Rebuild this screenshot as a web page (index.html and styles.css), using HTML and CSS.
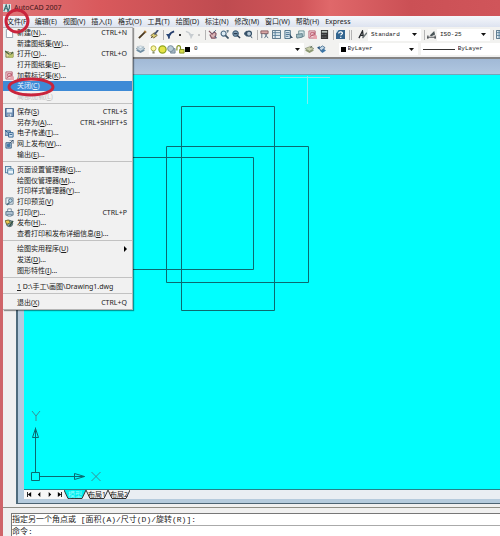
FILE: index.html
```html
<!DOCTYPE html>
<html>
<head>
<meta charset="utf-8">
<title>AutoCAD 2007</title>
<link rel="stylesheet" href="styles.css">
</head>
<body>
<svg class="defs" aria-hidden="true">
  <symbol id="new" viewBox="0 0 10 10"><path d="M1.500.5h5l2 2v7h-7z" fill="#fff" stroke="#8d98a8"/><path d="M6.500.5v2h2" fill="none" stroke="#8d98a8"/></symbol>
  <symbol id="open" viewBox="0 0 10 10"><path d="M1 2h3l1 1h4v5H1z" fill="#e4dc9a" stroke="#7c7a52"/><path d="M0 1l5 4M4 8l5-6" stroke="#46633c" stroke-width="1.300"/><path d="M3 8l2-3h5L8 9z" fill="#b8c36a"/></symbol>
  <symbol id="markup" viewBox="0 0 10 10"><path d="M1 1h7v8H1z" fill="#f4d5da" stroke="#b66677"/><path d="M3 3h4v3H3zM2 8l6-5" fill="none" stroke="#b8566a"/><path d="M6 6h4v4H6z" fill="#e7a5ae"/></symbol>
  <symbol id="save" viewBox="0 0 10 10"><path d="M.5.5h9v9h-9z" fill="#7091b5" stroke="#3e5c83"/><path d="M2 1h6v4H2z" fill="#e6eef6"/><path d="M3 6.500h4v3H3z" fill="#d4dfe9"/><path d="M4 7h1v2H4z" fill="#345"/></symbol>
  <symbol id="send" viewBox="0 0 10 10"><path d="M0 2h6v5H0z" fill="#9fb8cf" stroke="#43688f"/><path d="M4 4h5v5H4z" fill="#d6e6f2" stroke="#2a608f"/><path d="M0 1l3 3M5 6h3" stroke="#1d5586"/></symbol>
  <symbol id="web" viewBox="0 0 10 10"><path d="M1 3h6v6H1z" fill="#a8bed2" stroke="#426383"/><circle cx="4" cy="6" r="2" fill="#437aa6"/><path d="M5 4l4-4v4M5 0h4" fill="none" stroke="#344f6b"/></symbol>
  <symbol id="page" viewBox="0 0 10 10"><rect x=".5" y=".5" width="6" height="7" fill="#dce9f2" stroke="#507b9c"/><rect x="3" y="3" width="6.500" height="6" rx="1" fill="#eaf4fb" stroke="#3f7399"/><path d="M3 4.500h6" stroke="#75a5c5"/></symbol>
  <symbol id="preview" viewBox="0 0 10 10"><path d="M1 1h8v7H1z" fill="#e8f0f5" stroke="#6c8292"/><circle cx="6" cy="4" r="2" fill="#c2dcec" stroke="#45677e"/><path d="M5 6L2 9" stroke="#45677e" stroke-width="1.500"/></symbol>
  <symbol id="print" viewBox="0 0 10 10"><path d="M3 4V1h4v3" fill="#fff" stroke="#718597"/><path d="M1 4h8v4H1z" fill="#b7cad9" stroke="#557085"/><path d="M3 7h4v2H3z" fill="#f5faff" stroke="#647f94"/></symbol>
  <symbol id="publish" viewBox="0 0 10 10"><circle cx="5" cy="5" r="3.500" fill="#83a6b2" stroke="#4a5f62"/><path d="M0 2l4-1 2 3-4 2z" fill="#e8c850" stroke="#6d652e"/><path d="M5 8l4-6" stroke="#354f3f" stroke-width="1.500"/></symbol>
  <symbol id="pencil" viewBox="0 0 10 10"><path d="M1 9L8 2" stroke="#493820" stroke-width="2"/><path d="M7 1l2 2" stroke="#a67a3d" stroke-width="2"/></symbol>
  <symbol id="brush" viewBox="0 0 10 10"><path d="M1 6l4-3 3 3-4 3z" fill="#d8cc74" stroke="#746332"/><path d="M5 5l4-5" stroke="#415070" stroke-width="2"/><path d="M1 9l2-2" stroke="#4f452a"/></symbol>
  <symbol id="undo" viewBox="0 0 10 10"><path d="M3.500 9.500C2 6.500 4 3 9 1.500" fill="none" stroke="#233c6b" stroke-width="2"/><path d="M0 4.500l6 0-3 4.500z" fill="#294778"/></symbol>
  <symbol id="redo" viewBox="0 0 10 10"><path d="M6.500 9.500C8 6.500 6 3 1 1.500" fill="none" stroke="#c7ccd0" stroke-width="1.500"/><path d="M4 4.500h6L7 9z" fill="#c7ccd0"/></symbol>
  <symbol id="pan" viewBox="0 0 10 10"><path d="M1 1l4 4M2 5l2 4h4l1-5-2-2-2 2" fill="#dab3b5" stroke="#805260" stroke-width="1.200"/><path d="M6 3l3-3M7 7l3 2" stroke="#4d6988"/></symbol>
  <symbol id="zoom" viewBox="0 0 10 10"><circle cx="4" cy="4" r="2.800" fill="#dcebf3" stroke="#476780" stroke-width="1.200"/><path d="M6 6l3.500 3.500" stroke="#3a5264" stroke-width="1.800"/><path d="M7 1h3M8.500 0v3" stroke="#56717f"/></symbol>
  <symbol id="zoomwin" viewBox="0 0 10 10"><circle cx="4" cy="4" r="3" fill="#829fb5" stroke="#405f79" stroke-width="1.200"/><path d="M6 6l3 3M2 4h4" stroke="#283c51" stroke-width="1.600"/></symbol>
  <symbol id="zoomprev" viewBox="0 0 10 10"><circle cx="5.500" cy="4" r="2.800" fill="#b8cbd9" stroke="#344f66" stroke-width="1.300"/><path d="M7 6l2 3M0 4l3-3v6z" fill="#344f66" stroke="#344f66"/></symbol>
  <symbol id="props" viewBox="0 0 10 10"><path d="M1 1h8v3H1z" fill="#d9a6a6" stroke="#875b60"/><path d="M2 4v5M5 4l4 5M8 4L5 9" stroke="#566b80"/></symbol>
  <symbol id="grid" viewBox="0 0 10 10"><path d="M.5.5h9v9h-9z" fill="#e4edf2" stroke="#48687e"/><path d="M1 3h8M1 6h8M3.500 1v8" stroke="#507b96"/></symbol>
  <symbol id="palette" viewBox="0 0 10 10"><path d="M1 .5h6v9H1z" fill="#dbe9f1" stroke="#426880"/><path d="M2 3h4M2 5h4M2 7h3" stroke="#416b8b"/><path d="M6 4l4 5H7z" fill="#314f68"/></symbol>
  <symbol id="sheets" viewBox="0 0 10 10"><path d="M3 1h6v6H3z" fill="#dae9ec" stroke="#668b91"/><path d="M0 5l7-1v4l-6 1z" fill="#9bb9c1" stroke="#5e7e89"/></symbol>
  <symbol id="calc" viewBox="0 0 10 10"><path d="M1 0h8v10H1z" fill="#343434"/><path d="M2 1h6v2H2z" fill="#b6beb8"/><path d="M2 5h6M2 8h6" stroke="#8f9598" stroke-dasharray="1 1"/></symbol>
  <symbol id="help" viewBox="0 0 10 10"><path d="M0 0h10v10H0z" fill="#32658f"/><path d="M3 4c0-3 5-2 4 0L5 6" fill="none" stroke="#fff" stroke-width="1.400"/><path d="M4.500 7.500h1.500V9H4.500zM0 0h3L0 4z" fill="#d5e7f2"/></symbol>
  <symbol id="style" viewBox="0 0 10 10"><path d="M1 9L5 1l1 7M2 6h4" fill="none" stroke="#24282c" stroke-width="1.400"/><path d="M5 9l5-6" stroke="#6b7577" stroke-width="1.600"/></symbol>
  <symbol id="dim" viewBox="0 0 10 10"><path d="M0 8h10M1 6v4M9 6v4" stroke="#353b40"/><path d="M3 6l5-5 1 4-4 2z" fill="#4a5558"/></symbol>
  <symbol id="layers" viewBox="0 0 10 10"><path d="M0 6l5-2 5 2-5 3z" fill="#6d8da4"/><path d="M0 4l5-2 5 2-5 3z" fill="#c8d9e3" stroke="#6e8898" stroke-width=".7"/><path d="M1 2l4-1 4 1-4 2z" fill="#e5eff4" stroke="#91a5b0" stroke-width=".5"/></symbol>
  <symbol id="layerset" viewBox="0 0 10 10"><path d="M0 6l5-2 5 2-5 3z" fill="#8e9b72"/><path d="M0 4l5-2 5 2-5 3z" fill="#c9cfab" stroke="#7b856c" stroke-width=".7"/><path d="M6 1l2 2M8 1L6 3" stroke="#61705a"/></symbol>
  <symbol id="layerprev" viewBox="0 0 10 10"><path d="M3 6l4-2 3 2-4 3z" fill="#3c76a7"/><path d="M2 4l4-3 3 2-4 3z" fill="#c4d9e8" stroke="#476f92"/><path d="M0 3l3-2v4z" fill="#26527c"/></symbol>
  <symbol id="bulb" viewBox="0 0 10 10"><circle cx="5" cy="3.700" r="2.800" fill="#fbf8a2" stroke="#aaa73b"/><path d="M3.800 7h2.400v2.500H3.800z" fill="#88906a"/></symbol>
  <symbol id="sun" viewBox="0 0 10 10"><circle cx="5" cy="5" r="4" fill="#e7e447" stroke="#8fa51c" stroke-width="1.400"/></symbol>
  <symbol id="vp" viewBox="0 0 10 10"><path d="M4 4h5v5H4z" fill="#a5b7c4" stroke="#738997"/><circle cx="4" cy="4" r="3.300" fill="#b8cbd6" stroke="#6f8795"/></symbol>
  <symbol id="lock" viewBox="0 0 10 10"><path d="M1 6V3c0-3 4-3 4 0v2" fill="none" stroke="#849425" stroke-width="1.300"/><path d="M4 5h5v4H4z" fill="#d8dd4b" stroke="#849425"/></symbol>
  <symbol id="down" viewBox="0 0 5 3"><path d="M0 0h5L2.500 3z" fill="#111"/></symbol>
</svg>

<div class="app">
  <header class="title">
    <svg class="logo" viewBox="0 0 10 10"><path d="M0 0h10v10H0z" fill="#d7e5e4"/><path d="M1 9L4 1l2 7M2 6h4M8 1v4L6 9h3" fill="none" stroke="#376a70" stroke-width="1.400"/></svg>
    <span>AutoCAD 2007</span>
  </header>

  <nav class="menubar">
    <button>文件(F)</button><button>编辑(E)</button><button>视图(V)</button><button>插入(I)</button><button>格式(O)</button><button>工具(T)</button><button>绘图(D)</button><button>标注(N)</button><button>修改(M)</button><button>窗口(W)</button><button>帮助(H)</button><button>Express</button>
  </nav>

  <div class="toolbar">
    <div class="tools">
      <button aria-label="Pencil"><svg><use href="#pencil"/></svg></button>
      <button aria-label="Match properties"><svg><use href="#brush"/></svg></button>
    </div>
    <div class="tools sep">
      <button aria-label="Undo"><svg><use href="#undo"/></svg></button>
      <i class="dot"></i>
      <button aria-label="Redo"><svg><use href="#redo"/></svg></button>
      <i class="dot faint"></i>
    </div>
    <div class="tools sep">
      <button aria-label="Pan"><svg><use href="#pan"/></svg></button>
      <button aria-label="Zoom"><svg><use href="#zoom"/></svg></button>
      <button aria-label="Zoom window"><svg><use href="#zoomwin"/></svg></button>
      <button aria-label="Zoom previous"><svg><use href="#zoomprev"/></svg></button>
    </div>
    <div class="tools sep">
      <button aria-label="Properties"><svg><use href="#props"/></svg></button>
      <button aria-label="Design center"><svg><use href="#grid"/></svg></button>
      <button aria-label="Tool palettes"><svg><use href="#palette"/></svg></button>
      <button aria-label="Sheet set"><svg><use href="#sheets"/></svg></button>
      <button aria-label="Markup"><svg><use href="#markup"/></svg></button>
      <button aria-label="Calculator"><svg><use href="#calc"/></svg></button>
    </div>
    <div class="tools sep"><button aria-label="Help"><svg><use href="#help"/></svg></button></div>
    <div class="tools sep grip"><button aria-label="Text style"><svg><use href="#style"/></svg></button></div>
    <div class="combo style"><select aria-label="Text style"><option>Standard</option></select><svg class="arrow"><use href="#down"/></svg></div>
    <div class="tools sep"><button aria-label="Dimension style"><svg><use href="#dim"/></svg></button></div>
    <div class="combo style"><select aria-label="Dimension style"><option>ISO-25</option></select><svg class="arrow"><use href="#down"/></svg></div>
    <div class="tools sep cut"><button aria-label="Table style"><svg><use href="#grid"/></svg></button></div>
  </div>

  <div class="toolbar second">
    <div class="tools"><button aria-label="Layers"><svg><use href="#layers"/></svg></button></div>
    <div class="combo layer">
      <svg><use href="#bulb"/></svg><svg><use href="#sun"/></svg><svg><use href="#vp"/></svg><svg><use href="#lock"/></svg><i class="swatch"></i>
      <select aria-label="Layer"><option>0</option></select><svg class="arrow"><use href="#down"/></svg>
    </div>
    <div class="tools after">
      <button aria-label="Make current"><svg><use href="#layerset"/></svg></button>
      <button aria-label="Layer previous"><svg><use href="#layerprev"/></svg></button>
    </div>
    <div class="combo color"><i class="swatch"></i><select aria-label="Color"><option>ByLayer</option></select><svg class="arrow"><use href="#down"/></svg></div>
    <div class="combo line"><i class="rule"></i><select aria-label="Linetype"><option>ByLayer</option></select></div>
  </div>

  <main class="workspace">
    <div class="doc">
      <div class="doctitle"></div>
      <svg class="canvas">
        <g transform="translate(-24 -75)" fill="none" stroke="#0b6a70" stroke-width="1">
          <path d="M181.500 106.500h93v204h-93zM166.500 146.500h142v136h-142zM100 157.500h153.500v112H100"/>
          <path d="M307.500 76v28M280 77.500h50" stroke="#80edef"/>
          <path d="M31.500 472.500h8v8h-8zM35.500 472.500v-45M39.500 476.500h45M32.500 437.500l3-9 3 9zM74.500 473.500v6l10-3z"/>
          <path d="M32 411l4 5 4-5M36 416v5M91.500 472l9 9M100.500 472l-9 9" stroke="#3a8f94"/>
        </g>
      </svg>
      <div class="tabs">
        <button aria-label="First"><svg viewBox="0 0 6 6"><path d="M0 0h1v6H0zM5 0v6L1 3z"/></svg></button>
        <button aria-label="Previous"><svg viewBox="0 0 6 6"><path d="M4 0v6L1 3z"/></svg></button>
        <button aria-label="Next"><svg viewBox="0 0 6 6"><path d="M2 0v6l3-3z"/></svg></button>
        <button aria-label="Last"><svg viewBox="0 0 6 6"><path d="M5 0h1v6H5zM1 0v6l4-3z"/></svg></button>
        <button class="tab on"><svg viewBox="0 0 22 9" preserveAspectRatio="none"><path d="M0 0l4 8.500h14L22 0"/></svg><span>模型</span></button>
        <button class="tab"><svg viewBox="0 0 22 9" preserveAspectRatio="none"><path d="M0 0l4 8.500h14L22 0"/></svg><span>布局1</span></button>
        <button class="tab"><svg viewBox="0 0 22 9" preserveAspectRatio="none"><path d="M0 0l4 8.500h14L22 0"/></svg><span>布局2</span></button>
      </div>
    </div>
  </main>

  <footer class="command">
    <div class="log">指定另一个角点或 [面积(A)/尺寸(D)/旋转(R)]:</div>
    <label class="prompt">命令:<input type="text"></label>
  </footer>

  <div class="menu">
    <div class="group seven">
      <button><svg><use href="#new"/></svg><span>新建(<u>N</u>)...</span><kbd>CTRL+N</kbd></button>
      <button><span>新建图纸集(<u>W</u>)...</span></button>
      <button><svg><use href="#open"/></svg><span>打开(<u>O</u>)...</span><kbd>CTRL+O</kbd></button>
      <button><span>打开图纸集(<u>E</u>)...</span></button>
      <button><svg><use href="#markup"/></svg><span>加载标记集(<u>K</u>)...</span></button>
      <button class="active"><span>关闭(<u>C</u>)</span></button>
      <button disabled><span>局部加载(<u>L</u>)</span></button>
    </div>
    <div class="group five">
      <button><svg><use href="#save"/></svg><span>保存(<u>S</u>)</span><kbd>CTRL+S</kbd></button>
      <button><span>另存为(<u>A</u>)...</span><kbd>CTRL+SHIFT+S</kbd></button>
      <button><svg><use href="#send"/></svg><span>电子传递(<u>T</u>)...</span></button>
      <button><svg><use href="#web"/></svg><span>网上发布(<u>W</u>)...</span></button>
      <button><span>输出(<u>E</u>)...</span></button>
    </div>
    <div class="group seven">
      <button><svg><use href="#page"/></svg><span>页面设置管理器(<u>G</u>)...</span></button>
      <button><span>绘图仪管理器(<u>M</u>)...</span></button>
      <button><span>打印样式管理器(<u>Y</u>)...</span></button>
      <button><svg><use href="#preview"/></svg><span>打印预览(<u>V</u>)</span></button>
      <button><svg><use href="#print"/></svg><span>打印(<u>P</u>)...</span><kbd>CTRL+P</kbd></button>
      <button><svg><use href="#publish"/></svg><span>发布(<u>H</u>)...</span></button>
      <button><span>查看打印和发布详细信息(<u>B</u>)...</span></button>
    </div>
    <div class="group three">
      <button><span>绘图实用程序(<u>U</u>)</span><svg class="more" viewBox="0 0 3 6"><path d="M0 0l3 3-3 3z"/></svg></button>
      <button><span>发送(<u>D</u>)...</span></button>
      <button><span>图形特性(<u>I</u>)...</span></button>
    </div>
    <div class="group">
      <button><span class="path"><u>1</u> D:\手工\画图\Drawing1.dwg</span></button>
    </div>
    <div class="group">
      <button><span>退出(<u>X</u>)</span><kbd>CTRL+Q</kbd></button>
    </div>
  </div>

  <svg class="marks" aria-hidden="true">
    <ellipse cx="17" cy="21" rx="11" ry="11"/>
    <ellipse cx="31" cy="87" rx="22" ry="8"/>
  </svg>
</div>
</body>
</html>
```
FILE: styles.css
```css
* { box-sizing: border-box; }
body {
  margin: 0;
  font: 7px/10px "Noto Sans", "Noto Sans CJK SC", sans-serif;
  color: #222;
}
button, select, input, kbd { font: inherit; color: inherit; }
button { border: 0; padding: 0; background: none; white-space: nowrap; }
.defs { position: absolute; width: 0; height: 0; }

.app {
  position: relative;
  display: flex;
  flex-direction: column;
  min-height: 100vh;
  border-left: 3px solid #cf6469;
  background: #f0f0f0;
  overflow: hidden;
}

.title {
  display: flex;
  align-items: center;
  gap: 3px;
  height: 16px;
  margin-left: -3px;
  padding-left: 3px;
  color: #3c1518;
  background: linear-gradient(to right, #e0777a 0, #d9595c 20%, #bf4b50 45%, #d05559 60%, #e0686a 66%, #cb5055 82%, #d0555a 100%);
}
.logo { width: 8px; height: 8px; }

.menubar {
  display: flex;
  gap: 6px;
  height: 11px;
  padding-left: 4px;
  background: linear-gradient(#f5f7fb, #dde3f0);
}

.toolbar {
  display: flex;
  align-items: center;
  height: 15px;
  padding-left: 135px;
  background: #f2f2f0;
}
.tools { display: flex; align-items: center; gap: 2px; }
.tools button { display: block; width: 10px; height: 10px; }
.tools svg { display: block; width: 9px; height: 9px; }
.sep { margin-left: 3px; padding-left: 2px; border-left: 1px solid #b4b4b4; }
.grip { padding-left: 6px; border-left: 3px double #b4b4b4; }
.cut { margin-right: -6px; }
.dot { width: 5px; height: 2px; border: solid transparent; border-width: 0 2px 0 1px; background: #333; background-clip: padding-box; }
.dot.faint { background-color: #c5c5c5; }
.combo {
  display: flex;
  align-items: center;
  height: 12px;
  background: #fff;
  font: 6px/10px "Liberation Mono", monospace;
}
.combo select { flex: 1; min-width: 0; height: 10px; padding: 0; border: 0; background: none; appearance: none; }
.arrow { flex: none; width: 5px; height: 3px; margin-right: 4px; }
.style { flex: 1; padding-left: 3px; }
.second { height: 14px; padding-left: 133px; }
.layer { flex: 2; margin-left: 3px; }
.layer > svg:not(.arrow) { width: 9px; height: 9px; }
.swatch { width: 5px; height: 5px; background: #000; }
.layer select { margin-left: 4px; }
.after { margin: 0 12px 0 1px; }
.color { flex: 1; gap: 2px; padding-left: 2px; }
.line { flex: 1; margin-left: 3px; padding-left: 2px; gap: 3px; }
.rule { width: 32px; height: 1px; background: #333; }

.workspace {
  display: flex;
  flex: 1;
  margin-top: 1px;
  border-top: 2px solid #848484;
  border-bottom: 1px solid #8d8d85;
  padding-bottom: 3px;
}
.doc {
  display: flex;
  flex: 1;
  flex-direction: column;
  margin-left: 13px;
  border-left: 2px solid #4f6b7c;
  border-bottom: 1px solid #4b6272;
  background: #b5cbdd;
  padding: 0 0 4px 6px;
}
.doctitle {
  height: 16px;
  margin-left: -6px;
  border-bottom: 1px solid #72a6ba;
  background: linear-gradient(#a1b9d6, #b0c7e0);
}
.canvas { flex: 1; width: 100%; min-height: 0; background: #0ff; }
.tabs {
  display: flex;
  align-items: center;
  height: 10px;
  border-top: 1px solid #258188;
  background: #e9eef3;
}
.tabs button { width: 10px; height: 9px; background: #f7f7f7; }
.tabs button svg { display: block; width: 5px; height: 5px; margin: auto; }
.tabs .tab { position: relative; width: 22px; background: none; }
.tabs .tab svg { position: absolute; inset: 0; width: 100%; height: 100%; fill: #f4f4f4; stroke: #333; }
.tabs .tab span { position: relative; display: block; line-height: 8px; }
.tabs .on svg { fill: #0ee; }
.tabs .on span { color: #8ff; }

.command {
  margin: 5px 0 0 8px;
  border: solid #777;
  border-width: 1px 0 0 1px;
  background: #fff;
  font: 8px/11px "Liberation Mono", "Noto Sans CJK SC", monospace;
}
.log { height: 12px; border-bottom: 1px solid #aaa; }
.prompt { display: flex; height: 10px; }
.prompt input { flex: 1; min-width: 0; border: 0; padding: 0; outline: 0; background: none; }

.menu {
  position: absolute;
  top: 27px;
  left: 0;
  width: 130px;
  border: 1px solid #b5b5b5;
  border-left: 0;
  background: #f1f1f1;
  box-shadow: 1px 1px 1px #0006;
}
.group { display: grid; grid-auto-rows: 1fr; height: 16px; padding: 3px 0 1px; border-bottom: 1px solid #c2c2c2; }
.group:last-child { border: 0; height: 15px; }
.group:first-child { height: 76px; padding-top: 0; }
.seven { height: 79px; }
.five { height: 58px; }
.three { height: 37px; }
.group button {
  position: relative;
  display: flex;
  align-items: center;
  min-height: 0;
  padding: 0 5px 0 14px;
  line-height: 10px;
}
.group button > svg { position: absolute; left: 2px; width: 9px; height: 9px; }
.group button > .more { left: auto; right: 5px; width: 3px; height: 6px; }
.group kbd { margin-left: auto; }
.group .active { background: #3e8ad6; color: #e8f3ff; }
.group button:disabled { color: #c4c4c4; }

.marks { position: absolute; top: 0; left: -3px; width: 60px; height: 100px; fill: none; stroke: #c9243c; stroke-width: 3px; pointer-events: none; }
```
